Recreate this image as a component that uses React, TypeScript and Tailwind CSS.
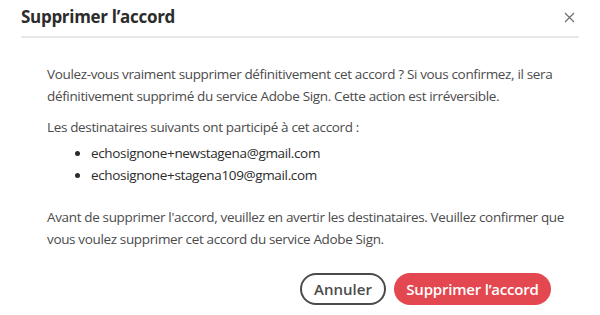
const recipients = [
	'echosignone+newstagena@gmail.com',
	'echosignone+stagena109@gmail.com',
];

export default function App() {
	return (
		<div className="h-[315px] w-[600px] bg-white font-['Open_Sans',sans-serif] text-[#4b4b4b]">
			<div className="mx-[21px] flex items-center justify-between border-b-2 border-[#e8e8e8] pt-[6px] pb-[8px]">
				<h1 className="text-[17px] leading-[22px] font-bold text-[#2c2c2c] tracking-[-0.3px]">
					Supprimer l’accord
				</h1>
				<button type="button" className="mr-[4px] text-[#6e6e6e]">
					<svg width="11" height="11" viewBox="0 0 11 11" fill="none" stroke="currentColor" strokeWidth="1.2">
						<path d="M1 1L10 10M10 1L1 10" />
					</svg>
				</button>
			</div>
			<div className="pl-[47px] pr-[36px] pt-[25px] text-[13.5px] leading-[22px] tracking-[-0.35px]">
				<p className="pr-[8px]">
					Voulez-vous vraiment supprimer définitivement cet accord ? Si vous
					confirmez, il sera définitivement supprimé du service Adobe Sign. Cette
					action est irréversible.
				</p>
				<p className="mt-[9px]">Les destinataires suivants ont participé à cet accord :</p>
				<ul className="mt-[4px] ml-[32px] list-disc pl-[12px] text-[#2c2c2c]">
					{recipients.map((r) => (
						<li key={r}>{r}</li>
					))}
				</ul>
				<p className="mt-[20px]">
					Avant de supprimer l'accord, veuillez en avertir les destinataires.
					Veuillez confirmer que vous voulez supprimer cet accord du service Adobe
					Sign.
				</p>
			</div>
			<div className="mt-[23px] flex justify-end gap-[8px] pr-[49px]">
				<button
					type="button"
					className="h-[32px] w-[86px] rounded-full border-2 border-[#4b4b4b] text-[15px] font-semibold text-[#4b4b4b]"
				>
					Annuler
				</button>
				<button
					type="button"
					className="h-[32px] w-[157px] rounded-full bg-[#e34850] text-[15px] font-semibold text-white tracking-[-0.2px]"
				>
					Supprimer l’accord
				</button>
			</div>
		</div>
	);
}
